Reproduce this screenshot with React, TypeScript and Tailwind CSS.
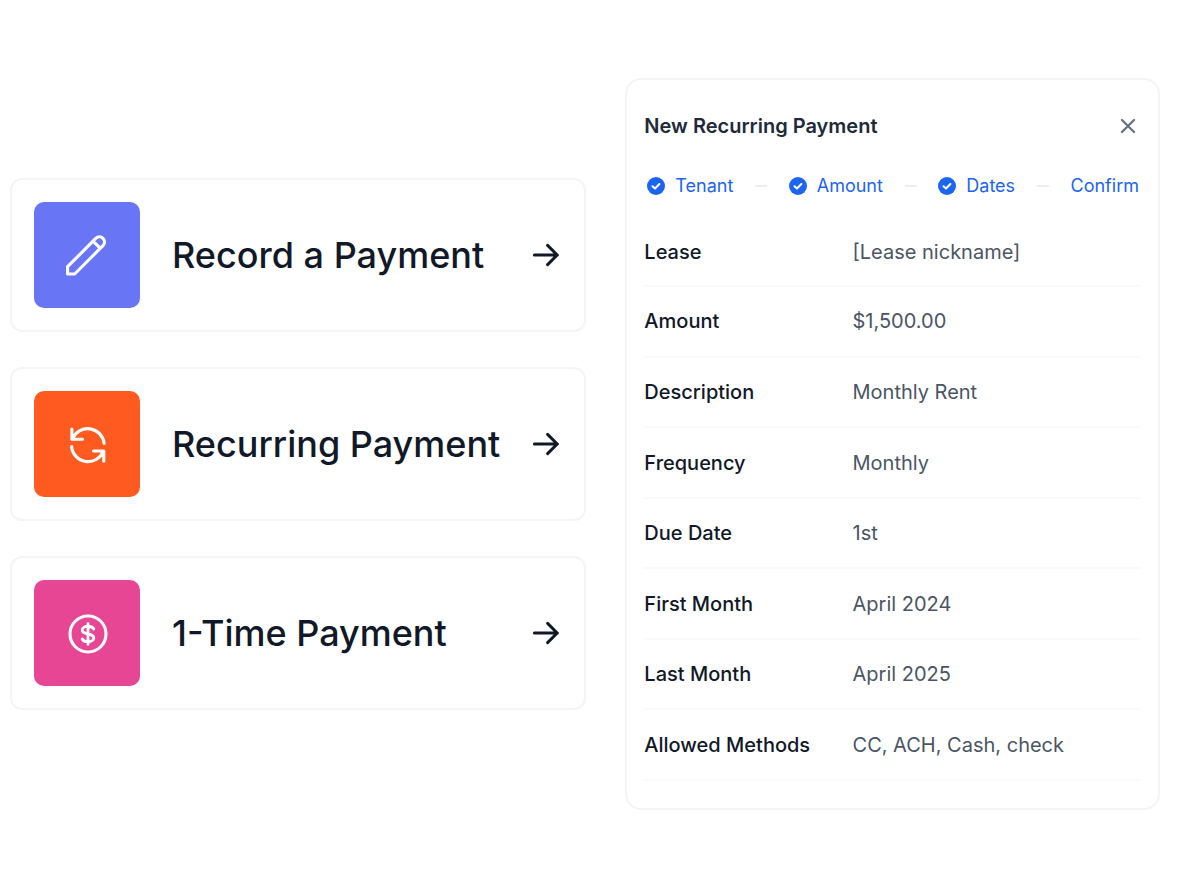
import React from "react";

type Action = { title: string; tile: string; icon: React.ReactNode };

const iconProps = {
  viewBox: "0 0 54 54",
  fill: "none",
  stroke: "currentColor",
  strokeWidth: 3.1,
  strokeLinecap: "round" as const,
  strokeLinejoin: "round" as const,
  className: "size-[54px] text-white",
  "aria-hidden": true,
};

const actions: Action[] = [
  {
    title: "Record a Payment",
    tile: "bg-[#6875f5]",
    icon: (
      <svg {...iconProps}>
        <path d="M33.1 13.1l7.2 7.2M36 10.2a5.1 5.1 0 0 1 7.2 7.2L14.7 46H7.6v-7.3Z" />
      </svg>
    ),
  },
  {
    title: "Recurring Payment",
    tile: "bg-[#ff5a1f]",
    icon: (
      <svg {...iconProps}>
        <path d="M11.9 12v10.3h10.6M12.4 22a16.5 16.5 0 0 1 31.7 4.4M43.8 44.3V34H33.5M43.3 34.4a16.5 16.5 0 0 1-31.7-4.9" />
      </svg>
    ),
  },
  {
    title: "1-Time Payment",
    tile: "bg-[#e74694]",
    icon: (
      <svg {...iconProps}>
        <circle cx="28" cy="28" r="18" />
        <path strokeWidth={2.9} d="M28 17.8v20.4M33.8 23c-.8-1.6-3-2.7-5.8-2.7-3.4 0-5.8 1.6-5.8 3.8s2.2 3.3 5.8 3.9 5.8 1.7 5.8 3.9-2.4 3.8-5.8 3.8c-2.8 0-5-1.1-5.8-2.7" />
      </svg>
    ),
  },
];

const steps = [
  { label: "Tenant", done: true },
  { label: "Amount", done: true },
  { label: "Dates", done: true },
  { label: "Confirm", done: false },
];

const details = [
  ["Lease", "[Lease nickname]"],
  ["Amount", "$1,500.00"],
  ["Description", "Monthly Rent"],
  ["Frequency", "Monthly"],
  ["Due Date", "1st"],
  ["First Month", "April 2024"],
  ["Last Month", "April 2025"],
  ["Allowed Methods", "CC, ACH, Cash, check"],
];

function Arrow() {
  return (
    <svg viewBox="0 0 28 24" fill="none" stroke="currentColor" strokeWidth={3} strokeLinecap="round" strokeLinejoin="round" className="h-6 w-7 shrink-0" aria-hidden>
      <path d="M2.4 12h23M15.6 2.4l9.6 9.6-9.6 9.6" />
    </svg>
  );
}

function CheckBadge() {
  return (
    <svg viewBox="0 0 18 18" className="size-[18px] shrink-0" aria-hidden>
      <circle cx="9" cy="9" r="9" fill="#1c64f2" />
      <path d="M5.5 9.2l2.5 2.3 4.4-4.5" fill="none" stroke="#fff" strokeWidth={2} strokeLinecap="round" strokeLinejoin="round" />
    </svg>
  );
}

export default function App() {
  return (
    <main className="grid min-h-screen grid-cols-[576fr_535fr] content-start items-center gap-x-[39px] bg-white pt-[78px] pr-[21px] pb-[75px] pl-[10px] font-['Inter',sans-serif]">
      <div className="flex flex-col gap-[35px]">
        {actions.map((action) => (
          <button key={action.title} type="button" className="flex items-center gap-8 rounded-xl border-2 border-gray-100 py-[22px] pr-6 pl-[22px] text-left text-[#111928]">
            <span className={"flex size-[106px] shrink-0 items-center justify-center rounded-[10px] " + action.tile}>{action.icon}</span>
            <span className="flex-1 text-4xl font-medium whitespace-nowrap">{action.title}</span>
            <Arrow />
          </button>
        ))}
      </div>

      <section aria-labelledby="panel-title" className="rounded-2xl border-2 border-gray-100 pr-[18px] pb-[27px] pl-[17px]">
        <header className="flex items-center justify-between pt-7">
          <h2 id="panel-title" className="text-xl leading-9 font-semibold text-gray-800">New Recurring Payment</h2>
          <button type="button" aria-label="Close" className="flex size-6 items-center justify-center text-gray-500">
            <svg viewBox="0 0 16 16" fill="none" stroke="currentColor" strokeWidth={2.3} strokeLinecap="round" className="size-4" aria-hidden>
              <path d="M2 2l12 12M14 2L2 14" />
            </svg>
          </button>
        </header>

        <ol className="mt-7 flex items-center justify-between pr-px pl-[3px] text-lg leading-7 text-[#1c64f2]">
          {steps.map((step, i) => (
            <React.Fragment key={step.label}>
              {i > 0 && <li aria-hidden className="h-0.5 w-3 bg-gray-200/70" />}
              <li className="flex items-center gap-2.5">
                {step.done && <CheckBadge />}
                {step.label}
              </li>
            </React.Fragment>
          ))}
        </ol>

        <table className="mt-[18px] h-[563px] w-full border-collapse text-left text-xl">
          <tbody>
            {details.map(([label, value]) => (
              <tr key={label} className="border-b-2 border-gray-50">
                <th scope="row" className="w-[42%] font-medium text-[#111928]">{label}</th>
                <td className="text-gray-600">{value}</td>
              </tr>
            ))}
          </tbody>
        </table>
      </section>
    </main>
  );
}
